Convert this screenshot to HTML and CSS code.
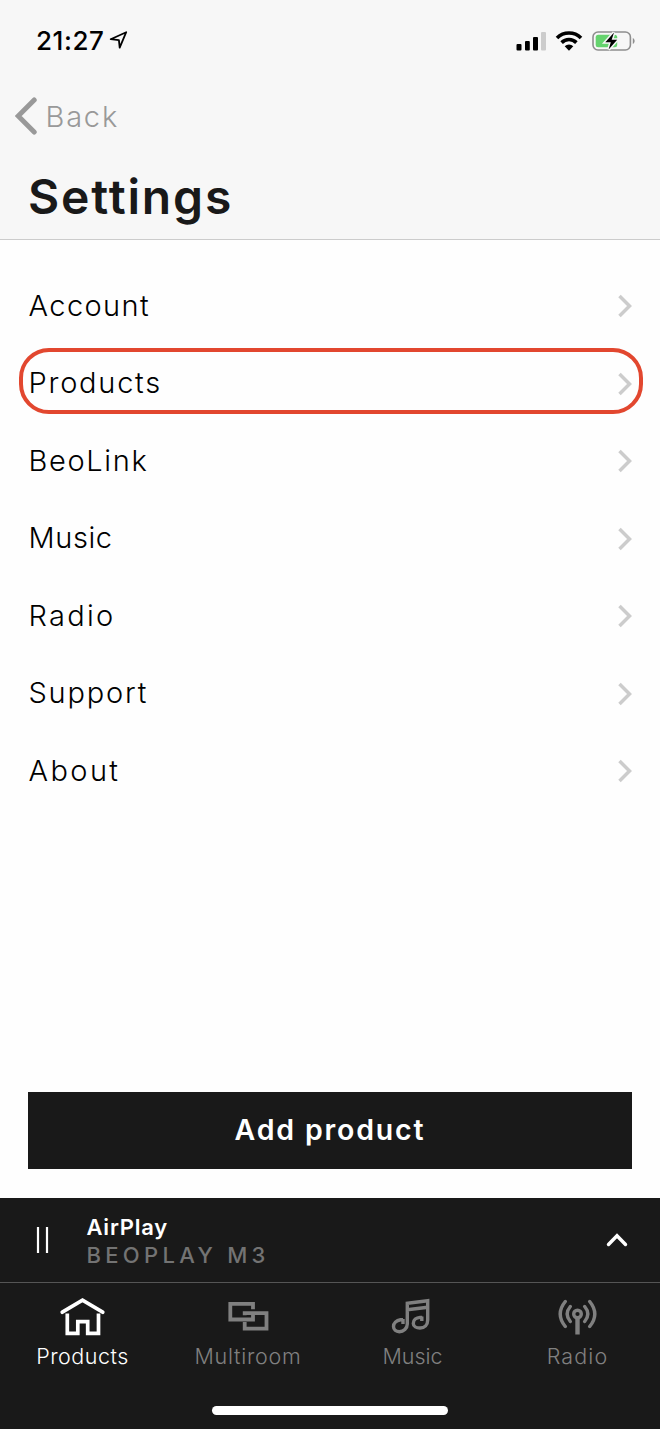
FILE: index.html
```html
<!DOCTYPE html>
<html lang="en">
<head>
<meta charset="utf-8">
<title>Settings</title>
<link rel="stylesheet" href="styles.css">
</head>
<body>
<div class="screen">
  <header class="header">
    <div class="status">
      <span class="time">21:27</span>
      <svg class="location" width="20" height="20" viewBox="0 0 20 20"><path d="M1.7 9.2 17.2 2.2 10.7 17.6 9.9 10.1Z" fill="none" stroke="#000" stroke-width="1.8" stroke-linejoin="round"/></svg>
      <svg class="signal" width="31" height="20" viewBox="0 0 31 20">
        <rect x=".5" y="13" width="5" height="6.5" rx="1"/><rect x="9" y="10" width="4.8" height="9.5" rx="1"/><rect x="17" y="6" width="5" height="13.5" rx="1"/><rect x="25" y="1" width="5" height="18.5" rx="1" fill="#ccc"/>
      </svg>
      <svg class="wifi" width="28" height="20" viewBox="0 0 28 20">
        <path d="M2 6.9A17 17 0 0 1 26 6.9M6.6 11.6A10.5 10.5 0 0 1 21.4 11.6" fill="none" stroke="#000" stroke-width="3.6"/>
        <path d="M9.7 15.3A6.2 6.2 0 0 1 18.3 15.3L14 19.7Z"/>
      </svg>
      <svg class="battery" width="44" height="22" viewBox="0 0 44 22">
        <rect x="1" y="2" width="37.4" height="18" rx="5" fill="none" stroke="#8e8e8e" stroke-width="1.6"/>
        <rect x="3.7" y="4.7" width="21.5" height="12.6" rx="2.5" fill="#65d36e"/>
        <path d="M40.8 8v6c2.4-1 2.4-5 0-6Z" fill="#8e8e8e"/>
        <path d="M22 2.500 13.300 12.200h5.500L16.600 19.500 25.200 9.800h-5.500Z" stroke="#f7f7f7" stroke-width="3" paint-order="stroke"/>
      </svg>
    </div>
    <div class="back">
      <svg width="22" height="38" viewBox="0 0 22 38"><path d="M19.2 3 3.2 19 19.2 35" fill="none" stroke="#999" stroke-width="5" stroke-linecap="round" stroke-linejoin="miter"/></svg>
      <span>Back</span>
    </div>
    <h1 class="title">Settings</h1>
  </header>

  <main class="content">
    <div class="row account"><span>Account</span><svg class="chevron" viewBox="0 0 16 24"><path d="M2.5 2 12.5 12 2.5 22"/></svg></div>
    <div class="row products selected"><span>Products</span><svg class="chevron" viewBox="0 0 16 24"><path d="M2.5 2 12.5 12 2.5 22"/></svg></div>
    <div class="row beolink"><span>BeoLink</span><svg class="chevron" viewBox="0 0 16 24"><path d="M2.5 2 12.5 12 2.5 22"/></svg></div>
    <div class="row music"><span>Music</span><svg class="chevron" viewBox="0 0 16 24"><path d="M2.5 2 12.5 12 2.5 22"/></svg></div>
    <div class="row radio"><span>Radio</span><svg class="chevron" viewBox="0 0 16 24"><path d="M2.5 2 12.5 12 2.5 22"/></svg></div>
    <div class="row support"><span>Support</span><svg class="chevron" viewBox="0 0 16 24"><path d="M2.5 2 12.5 12 2.5 22"/></svg></div>
    <div class="row about"><span>About</span><svg class="chevron" viewBox="0 0 16 24"><path d="M2.5 2 12.5 12 2.5 22"/></svg></div>
  </main>

  <div class="add">Add product</div>

  <footer class="footer">
    <div class="player">
      <svg class="pause" width="14" height="26" viewBox="0 0 14 26"><path d="M3 0V26M12 0V26" stroke="#fff" stroke-width="2.2"/></svg>
      <div class="playing">
        <div class="source">AirPlay</div>
        <div class="device">BEOPLAY M3</div>
      </div>
      <svg class="expand" width="24" height="16" viewBox="0 0 24 16"><path d="M3.5 12.5 12 3.7 20.5 12.5" fill="none" stroke="#fff" stroke-width="3.4" stroke-linecap="round"/></svg>
    </div>
    <nav class="tabs">
      <div class="tab tab-products">
        <svg width="46" height="42" viewBox="0.5 0 46 42" fill="none" stroke="#fff" stroke-width="3.7"><path d="M2.8 17.2 23 5.2 43.2 17.2" stroke-linecap="round"/><path d="M7.800 18.500V38.300H18.300V26.700H28.200V38.300H39V18.500"/></svg>
        <span>Products</span>
      </div>
      <div class="tab tab-multiroom">
        <svg width="46" height="42" viewBox="0 0 46 42" fill="none" stroke="#808080" stroke-width="3.8"><path d="M28 14.200V8.800H5.300V24.500H28V19.500"/><path d="M19.700 20.200V18.100H41.500V33.600H19.700V27"/></svg>
        <span>Multiroom</span>
      </div>
      <div class="tab tab-music">
        <svg width="46" height="42" viewBox="1 0 46 42" fill="none" stroke="#808080" stroke-width="3.4"><path d="M14 24.800H11.500C7.200 25.500 4.500 28.500 4.500 31.600S7 36.700 10.300 36.700C14.500 36.700 18.300 33.600 18.300 29V8.200L38.700 5.700V25C38.700 29.800 35.600 33 31 33C27.500 33 24.300 31.600 24.300 28.400C24.300 24.800 27.400 22.600 31 22.400H33.200M18.300 14.800 38.700 12.300M14 24V29M32.800 21.500V26"/></svg>
        <span>Music</span>
      </div>
      <div class="tab tab-radio">
        <svg width="46" height="42" viewBox="0.5 0 46 42" fill="none" stroke="#808080" stroke-width="3.4"><circle cx="23" cy="19" r="3.800"/><path d="M23 23V39.500" stroke-width="4.400"/><path d="M15.800 11.500Q9.500 19 15.800 26.500M30.200 11.500Q36.500 19 30.200 26.500M10.800 6.500Q.6 19 10.800 31.500M35.200 6.500Q45.400 19 35.200 31.500" stroke-linecap="round"/></svg>
        <span>Radio</span>
      </div>
    </nav>
    <div class="home-indicator"></div>
  </footer>
</div>
</body>
</html>
```

FILE: styles.css
```css
*, *::after { box-sizing: border-box; }

body {
  margin: 0;
  background: #fefefe;
  color: #000;
  font-family: Inter, "Liberation Sans", sans-serif;
}

svg { display: block; flex: none; }
span { white-space: nowrap; }

.screen {
  width: 660px;
  height: 1429px;
  display: flex;
  flex-direction: column;
  overflow: hidden;
}

/* Header */
.header {
  height: 240px;
  flex: none;
  background: #f7f7f7;
  border-bottom: 1px solid #ccc;
}

.status {
  display: flex;
  align-items: center;
  height: 81px;
  padding: 0 24px 0 36px;
}

.time {
  font-size: 26px;
  font-weight: 550;
  letter-spacing: 0.6px;
  line-height: 30px;
}

.location { margin-left: 4px; margin-top: -2px; }
.signal { margin-left: auto; }
.wifi { margin-left: 8px; }
.battery { margin-left: 9px; }

.back {
  display: flex;
  align-items: center;
  height: 70px;
  padding-left: 15px;
  color: #999;
  font-size: 29px;
  font-weight: 350;
  letter-spacing: 1.8px;
}

.back span { margin-left: 8.5px; }

.title {
  margin: 0;
  padding: 16px 0 0 28px;
  color: #191919;
  font-size: 48px;
  font-weight: 600;
  letter-spacing: 1.86px;
  line-height: 60px;
}

/* Settings list */
.content {
  flex: 1;
  padding-top: 26.5px;
}

.row {
  position: relative;
  display: flex;
  align-items: center;
  justify-content: space-between;
  height: 77.5px;
  padding: 0 27.5px 0 28.5px;
  font-size: 29px;
  font-weight: 350;
}

.account { letter-spacing: 1.4px; }
.products { letter-spacing: 1.75px; }
.beolink { letter-spacing: 1.65px; }
.music { letter-spacing: 0.6px; }
.radio { letter-spacing: 2.3px; }
.support { letter-spacing: 1.8px; }
.about { letter-spacing: 2.4px; }

.selected::after {
  content: "";
  position: absolute;
  top: 4px;
  left: 19px;
  right: 17px;
  height: 66px;
  border: 4px solid #e2472f;
  border-radius: 30px;
}

.chevron {
  width: 16px;
  height: 24px;
  margin-top: 2px;
  fill: none;
  stroke: #ccc;
  stroke-width: 3.5;
}

.add {
  height: 77px;
  flex: none;
  margin: 0 28px 29px;
  background: #191919;
  color: #fff;
  font-size: 28.5px;
  font-weight: 600;
  letter-spacing: 1.83px;
  line-height: 76px;
  text-align: center;
}

/* Player and tab bar */
.footer {
  height: 231px;
  flex: none;
  background: #191919;
}

.player {
  display: flex;
  align-items: center;
  height: 85px;
  padding: 0 31px 0 35px;
  border-bottom: 1px solid #555;
}

.playing { margin: 2px auto 0 37.5px; }

.source {
  color: #fff;
  font-size: 22px;
  font-weight: 600;
  letter-spacing: 0.78px;
  line-height: 28px;
}

.device {
  color: #737373;
  font-size: 22px;
  font-weight: 500;
  letter-spacing: 4.3px;
  line-height: 28px;
}

.tabs {
  display: grid;
  grid-template-columns: repeat(4, 165px);
  height: 123px;
}

.tab {
  display: flex;
  flex-direction: column;
  align-items: center;
  padding-top: 12px;
  color: #808080;
  font-size: 21.5px;
  font-weight: 350;
  line-height: 24px;
}

.tab span { margin-top: 7px; }

.tab-products { color: #fff; letter-spacing: 0.5px; }
.tab-multiroom { padding-left: 1px; letter-spacing: 0.75px; }
.tab-music { letter-spacing: 0; }
.tab-radio { letter-spacing: 1.1px; }

.home-indicator {
  width: 236px;
  height: 9px;
  margin: 0 auto;
  border-radius: 5px;
  background: #fff;
}
```
